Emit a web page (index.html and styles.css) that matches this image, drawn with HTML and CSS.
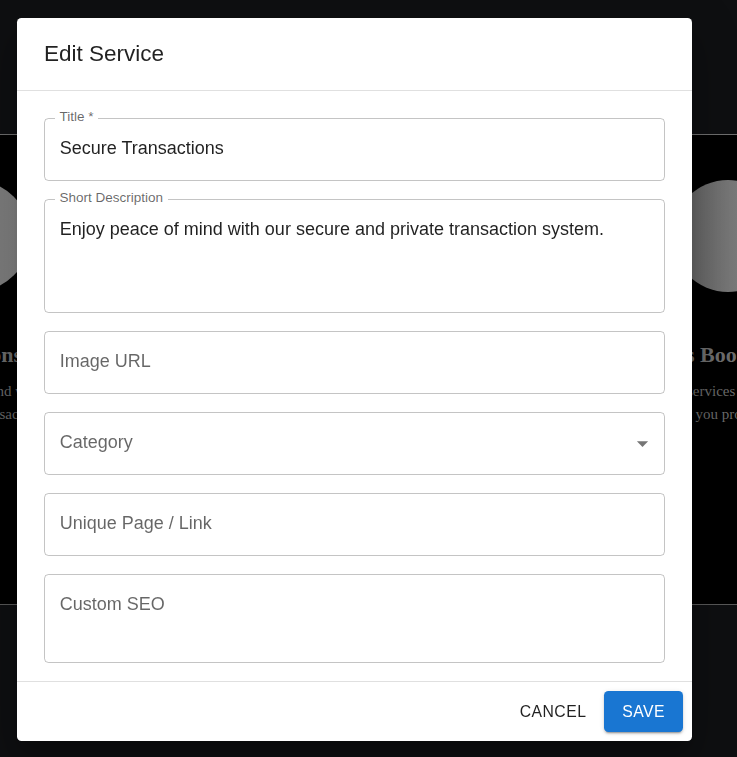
FILE: index.html
```html
<!DOCTYPE html>
<html lang="en">
<head>
<meta charset="utf-8">
<title>Edit Service</title>
<link rel="stylesheet" href="styles.css">
</head>
<body>
<div class="page">
  <header class="topbar"></header>
  <section class="services">
    <div class="cards">
      <article class="card card-left">
        <div class="circle"></div>
        <h3 class="card-title">Secure Transactions</h3>
        <p class="card-line l1">secure and worry</p>
        <p class="card-line l2">private transaction</p>
      </article>
      <article class="card card-right">
        <div class="circle"></div>
        <h3 class="card-title">s Booking</h3>
        <p class="card-line">services and</p>
        <p class="card-line">s you provide</p>
      </article>
    </div>
  </section>
  <footer class="bottom"></footer>
</div>

<div class="modal">
  <div class="dialog" role="dialog" aria-labelledby="dlg-title">
    <h2 class="dialog-title" id="dlg-title">Edit Service</h2>
    <div class="dialog-content">
      <div class="field">
        <span class="notch">Title *</span>
        <div class="value">Secure Transactions</div>
      </div>
      <div class="field field-multi3">
        <span class="notch">Short Description</span>
        <div class="value">Enjoy peace of mind with our secure and private transaction system.</div>
      </div>
      <div class="field">
        <div class="value placeholder">Image URL</div>
      </div>
      <div class="field">
        <div class="value placeholder">Category</div>
        <svg class="arrow" viewBox="0 0 24 24" aria-hidden="true"><path d="M7 10l5 5 5-5z"/></svg>
      </div>
      <div class="field">
        <div class="value placeholder">Unique Page / Link</div>
      </div>
      <div class="field field-multi2">
        <div class="value placeholder">Custom SEO</div>
      </div>
    </div>
    <div class="dialog-actions">
      <button class="btn btn-text" type="button">Cancel</button>
      <button class="btn btn-primary" type="button">Save</button>
    </div>
  </div>
</div>
</body>
</html>
```

FILE: styles.css
```css
html, body {
  margin: 0;
  padding: 0;
  height: 100%;
  overflow: hidden;
}

body {
  background: #0e0f11;
  font-family: "Liberation Sans", Arial, sans-serif;
}

.page {
  display: flex;
  flex-direction: column;
  height: 757px;
}

.topbar {
  height: 134px;
  flex: none;
  background: #0e0f11;
  border-bottom: 1px solid #6e6e6e;
}

.services {
  height: 469px;
  flex: none;
  background: #000;
  border-bottom: 1px solid #585858;
  overflow: hidden;
}

.cards {
  display: flex;
  justify-content: space-between;
  padding-top: 45px;
}

.card {
  display: flex;
  flex-direction: column;
  width: 300px;
  font-family: "Liberation Serif", "Times New Roman", serif;
}

.card-left {
  margin-left: -270px;
  align-items: flex-end;
}

.card-right {
  margin-right: -235px;
  align-items: flex-start;
}

.circle {
  width: 112px;
  height: 112px;
  border-radius: 50%;
  flex: none;
}

.card-left .circle {
  background: linear-gradient(to right, #5a5a5a, #8a8a8a);
}

.card-right .circle {
  background: linear-gradient(to right, #5e5e5e, #8c8c8c);
}

.card-title {
  margin: 48px 0 0;
  font-size: 22px;
  line-height: 30px;
  font-weight: 700;
  color: #6c6c6c;
  white-space: nowrap;
}

.card-line {
  margin: 0;
  font-size: 15px;
  line-height: 23px;
  color: #6a6a6a;
  white-space: nowrap;
}

.card-title + .card-line {
  margin-top: 10px;
}

.card-left .card-title { margin-right: 8px; }
.card-left .l1 { margin-right: -21px; }
.card-left .l2 { margin-right: -12px; }

.card-right .card-title { margin-left: 14px; }
.card-right .card-line { margin-left: 15px; }
.card-right .card-line + .card-line { margin-left: 14px; }

.bottom {
  flex: 1;
  background: #0e0f11;
}

/* Modal */
.modal {
  position: fixed;
  inset: 0;
  display: flex;
  align-items: flex-start;
  padding: 18px 0 0 17px;
}

.dialog {
  width: 675px;
  height: 723px;
  background: #fff;
  border-radius: 4.5px;
  display: flex;
  flex-direction: column;
  box-shadow: 0 11px 15px -7px rgba(0,0,0,.2), 0 24px 38px 3px rgba(0,0,0,.14), 0 9px 46px 8px rgba(0,0,0,.12);
  overflow: hidden;
}

.dialog-title {
  margin: 0;
  padding: 18px 27px;
  font-size: 22.5px;
  line-height: 36px;
  font-weight: 400;
  color: rgba(0,0,0,.87);
  flex: none;
}

.dialog-content {
  flex: 1;
  border-top: 1px solid rgba(0,0,0,.12);
  border-bottom: 1px solid rgba(0,0,0,.12);
  padding: 27px 27px 18px;
  display: flex;
  flex-direction: column;
  gap: 18px;
  overflow: hidden;
}

.field {
  position: relative;
  box-sizing: border-box;
  height: 63px;
  flex: none;
  border: 1px solid rgba(0,0,0,.23);
  border-radius: 4.5px;
  padding: 17px 14.75px 0;
}

.field-multi3 { height: 114px; }
.field-multi2 { height: 89px; }

.notch {
  position: absolute;
  top: -10px;
  left: 10px;
  padding: 0 4.5px;
  background: #fff;
  font-size: 13.5px;
  line-height: 15px;
  color: rgba(0,0,0,.6);
  white-space: nowrap;
}

.value {
  font-size: 18px;
  line-height: 25.875px;
  color: rgba(0,0,0,.87);
}

.placeholder {
  color: rgba(0,0,0,.6);
}

.arrow {
  position: absolute;
  right: 7.875px;
  top: 17px;
  width: 27px;
  height: 27px;
  fill: rgba(0,0,0,.54);
}

.dialog-actions {
  flex: none;
  display: flex;
  justify-content: flex-end;
  align-items: center;
  padding: 9px;
  gap: 9px;
}

.btn {
  font-family: "Liberation Sans", Arial, sans-serif;
  font-size: 15.75px;
  line-height: 27.5px;
  letter-spacing: 0.45px;
  text-transform: uppercase;
  border: 0;
  border-radius: 4.5px;
  cursor: pointer;
}

.btn-text {
  background: transparent;
  color: rgba(0,0,0,.87);
  padding: 6.75px 9px;
}

.btn-primary {
  background: #1976d2;
  color: #fff;
  padding: 6.75px 18px;
  box-shadow: 0 3px 1px -2px rgba(0,0,0,.2), 0 2px 2px 0 rgba(0,0,0,.14), 0 1px 5px 0 rgba(0,0,0,.12);
}
```
